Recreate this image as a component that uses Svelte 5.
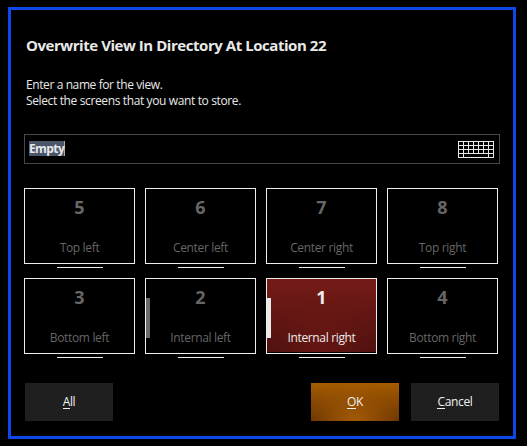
<script>
  const screens = [
    { n: 5, label: 'Top left' },
    { n: 6, label: 'Center left' },
    { n: 7, label: 'Center right' },
    { n: 8, label: 'Top right' },
    { n: 3, label: 'Bottom left' },
    { n: 2, label: 'Internal left', bar: true },
    { n: 1, label: 'Internal right', bar: true, selected: true },
    { n: 4, label: 'Bottom right' }
  ];
</script>

<div class="page">
  <div class="dialog">
    <h1>Overwrite View In Directory At Location 22</h1>
    <p class="first">Enter a name for the view.</p>
    <p>Select the screens that you want to store.</p>

    <div class="field">
      <span class="selection">Empty</span>
      <svg width="36" height="17" viewBox="0 0 36 17" shape-rendering="crispEdges">
        <path d="M.5 .5H35.5V16.5H.5ZM0 4.5H36M0 8.5H36M0 12.5H36M5.5 0V17M10.5 0V12M15.5 0V12M20.5 0V12M25.5 0V12M30.5 0V17" fill="none" stroke="#e9e9e9" />
      </svg>
    </div>

    <div class="grid">
      {#each screens as s}
        <div class="cell">
          <div class="tile" class:selected={s.selected}>
            {#if s.bar}<i class="bar"></i>{/if}
            <b>{s.n}</b>
            <span>{s.label}</span>
          </div>
          <div class="line"></div>
        </div>
      {/each}
    </div>

    <div class="buttons">
      <button class="all"><span><u>A</u>ll</span></button>
      <button class="ok"><span><u>O</u>K</span></button>
      <button><span><u>C</u>ancel</span></button>
    </div>
  </div>
</div>

<style>
  :global(body) { margin: 0; background: #000; }
  .page {
    box-sizing: border-box;
    width: 527px;
    height: 446px;
    padding: 7px 11px 7px 8px;
    background: #000;
    color: #e9e9e9;
    font: 12px/16px "Open Sans", "Noto Sans", sans-serif;
    overflow: hidden;
  }
  .dialog {
    box-sizing: border-box;
    width: 508px;
    height: 432px;
    border: 3px solid #0f47ea;
    padding: 24px 13px 0;
  }
  h1 {
    margin: 0 0 0 2px;
    font-size: 15px;
    line-height: 22px;
    font-weight: 700;
    letter-spacing: -0.45px;
    white-space: nowrap;
  }
  p { margin: 0 0 0 2px; white-space: nowrap; letter-spacing: -0.37px; }
  .first { margin-top: 21px; letter-spacing: -0.4px; }
  .field {
    box-sizing: border-box;
    display: flex;
    justify-content: space-between;
    align-items: flex-start;
    width: 476px;
    height: 30px;
    margin-top: 25px;
    padding: 6px 5px 0 4px;
    border: 1px solid #484848;
  }
  .selection {
    width: 35px;
    height: 15px;
    line-height: 15px;
    background: #4c566b;
    border-right: 1px solid #b4a994;
    font-weight: 700;
    letter-spacing: -0.6px;
    white-space: nowrap;
  }
  .grid {
    display: grid;
    grid-template-columns: repeat(4, 111px);
    grid-auto-rows: 90px;
    column-gap: 10px;
    margin-top: 24px;
  }
  .cell { display: flex; flex-direction: column; align-items: center; }
  .tile {
    position: relative;
    box-sizing: border-box;
    display: flex;
    flex-direction: column;
    align-items: center;
    width: 111px;
    height: 76px;
    padding-top: 6px;
    border: 1px solid #efefef;
    color: #666;
  }
  .tile b { font-size: 18px; line-height: 25px; font-weight: 700; }
  .tile span { margin-top: 20px; white-space: nowrap; letter-spacing: -0.34px; }
  .tile.selected {
    color: #ececec;
    background-image: radial-gradient(ellipse 58px 65px at 50% 100%, #7419159c, transparent), linear-gradient(#761b17, #4c110f);
    background-size: 100% 73px;
    background-repeat: no-repeat;
  }
  .bar { position: absolute; left: 0; top: 19px; width: 4px; height: 40px; background: #6a6a6a; }
  .selected .bar { background: #e9e9e9; }
  .line { width: 46px; height: 1px; margin-top: 3px; background: #efefef; }
  .buttons { display: flex; gap: 12px; margin: 15px 0 0 1px; }
  button {
    width: 88px;
    height: 38px;
    padding: 0;
    border: 0;
    background: #1f1f1f;
    color: #f0f0f0;
    font: inherit;
    letter-spacing: -0.35px;
  }
  u { text-decoration: none; box-shadow: inset 0 -1px #f0f0f0; display: inline-block; height: 15px; line-height: 16px; vertical-align: top; }
  .all { margin-right: 186px; }
  .ok { background: radial-gradient(ellipse 52px 38px at 50% 100%, #a45a04, transparent), linear-gradient(#a65d00, #643004); }
</style>
